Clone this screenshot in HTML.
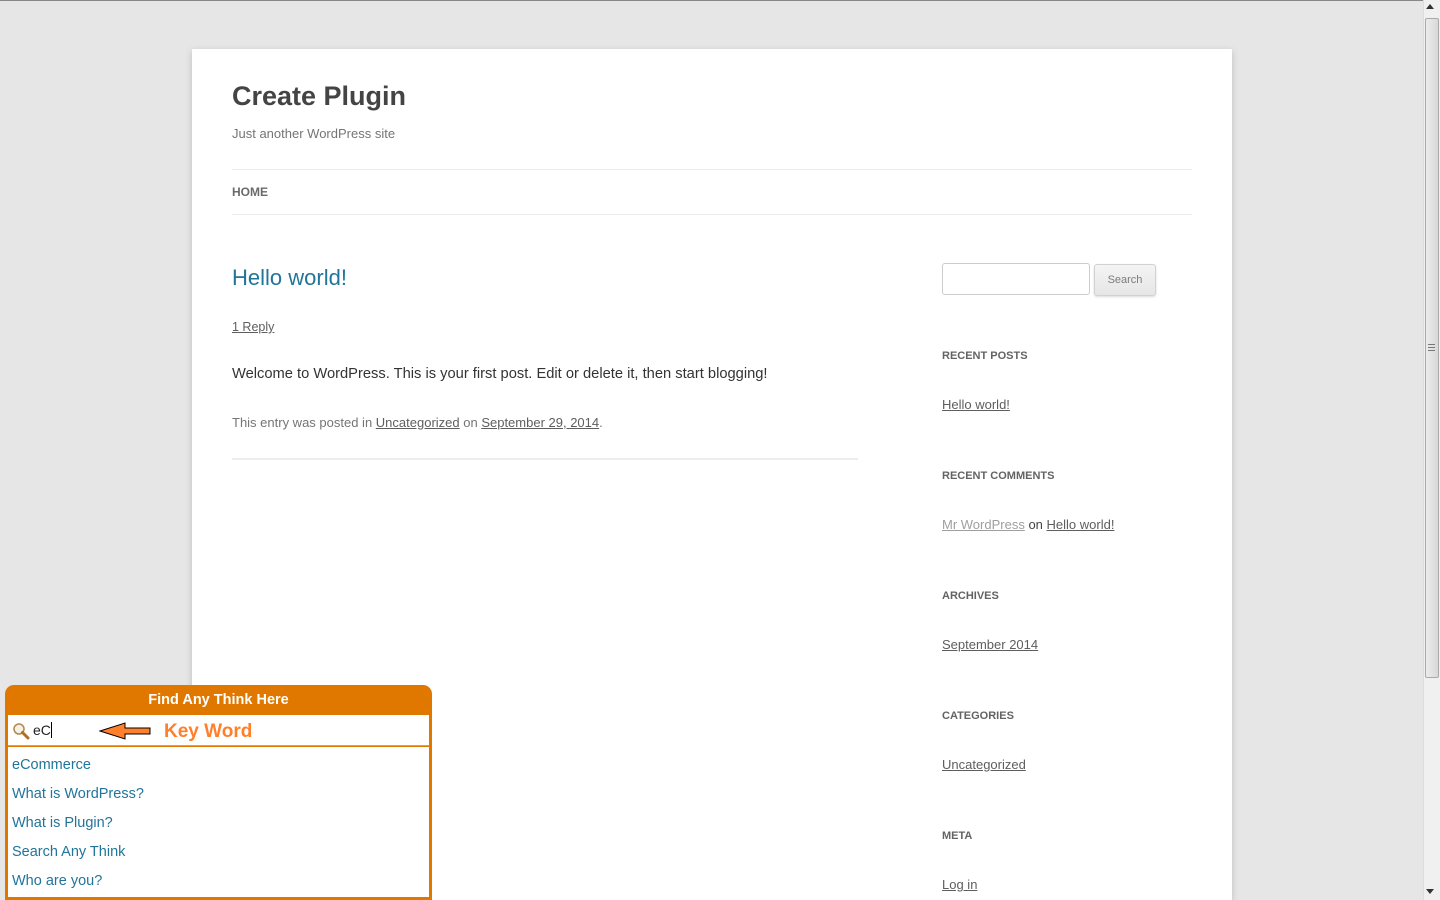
<!DOCTYPE html>
<html><head><meta charset="utf-8"><style>
*{margin:0;padding:0;box-sizing:border-box}
html,body{width:1440px;height:900px;overflow:hidden}
body{background:#e6e6e6;font-family:"Liberation Sans",sans-serif;color:#444;position:relative}
.abs{position:absolute;white-space:nowrap}
#page{position:absolute;left:192px;top:49px;width:1040px;height:851px;background:#fff;box-shadow:0 2px 6px rgba(100,100,100,.3)}
.u{text-decoration:underline;color:#5e5e5e}
.w{font-size:11px;font-weight:bold;color:#636363}
#sb{position:absolute;left:1423px;top:0;width:17px;height:900px;background:#f0f0f0;border-left:1px solid #ddd}
</style></head><body>
<div style="position:absolute;left:0;top:0;width:1440px;height:1px;background:#888"></div>
<div id="page"></div>
<div class="abs" style="left:232px;top:81px;font-size:27px;font-weight:bold;color:#444">Create Plugin</div>
<div class="abs" style="left:232px;top:126px;font-size:13px;color:#757575">Just another WordPress site</div>
<div class="abs" style="left:232px;top:169px;width:960px;height:1px;background:#ededed"></div>
<div class="abs" style="left:232px;top:185px;font-size:12px;font-weight:bold;color:#6a6a6a">HOME</div>
<div class="abs" style="left:232px;top:214px;width:960px;height:1px;background:#ededed"></div>
<div class="abs" style="left:232px;top:265px;font-size:22px;color:#21759b">Hello world!</div>
<div class="abs u" style="left:232px;top:320px;font-size:12.5px">1 Reply</div>
<div class="abs" style="left:232px;top:366px;font-size:14.7px;color:#333">Welcome to WordPress. This is your first post. Edit or delete it, then start blogging!</div>
<div class="abs" style="left:232px;top:415px;font-size:13px;color:#757575">This entry was posted in <span class="u">Uncategorized</span> on <span class="u">September 29, 2014</span>.</div>
<div class="abs" style="left:232px;top:458px;width:626px;height:2px;border-top:1px solid #ededed;border-bottom:1px solid #ededed"></div>
<div class="abs" style="left:942px;top:263px;width:148px;height:32px;border:1px solid #ccc;border-radius:3px"></div>
<div class="abs" style="left:1094px;top:264px;width:62px;height:32px;border:1px solid #d2d2d2;border-radius:3px;background:linear-gradient(#f4f4f4,#e6e6e6);font-size:11px;color:#7c7c7c;text-align:center;line-height:30px;box-shadow:0 1px 2px rgba(0,0,0,.15)">Search</div>
<div class="abs w" style="left:942px;top:350px">RECENT POSTS</div>
<div class="abs u" style="left:942px;top:397px;font-size:13px">Hello world!</div>
<div class="abs w" style="left:942px;top:470px">RECENT COMMENTS</div>
<div class="abs" style="left:942px;top:517px;font-size:13px;color:#444"><span class="u" style="color:#9f9f9f">Mr WordPress</span> on <span class="u">Hello world!</span></div>
<div class="abs w" style="left:942px;top:590px">ARCHIVES</div>
<div class="abs u" style="left:942px;top:637px;font-size:13px">September 2014</div>
<div class="abs w" style="left:942px;top:710px">CATEGORIES</div>
<div class="abs u" style="left:942px;top:757px;font-size:13px">Uncategorized</div>
<div class="abs w" style="left:942px;top:830px">META</div>
<div class="abs u" style="left:942px;top:877px;font-size:13px">Log in</div>

<div class="abs" style="left:5px;top:685px;width:427px;height:215px;background:#e07800;border-radius:9px 9px 0 0"></div>
<div class="abs" style="left:5px;top:692px;width:427px;text-align:center;font-size:14.5px;font-weight:bold;color:#fff">Find Any Think Here</div>
<div class="abs" style="left:8px;top:715px;width:421px;height:31px;background:#fff;border-bottom:1px solid #aaa"></div>
<div class="abs" style="left:8px;top:747px;width:421px;height:150px;background:#fff"></div>
<svg class="abs" style="left:12px;top:722px" width="18" height="18"><circle cx="7" cy="7" r="5" fill="#f8f0e0" stroke="#b08850" stroke-width="1.5"/><path d="M10.5 10.5L16 16" stroke="#b07020" stroke-width="3" stroke-linecap="round"/></svg>
<div class="abs" style="left:33px;top:722px;font-size:14px;color:#222">eC<span style="display:inline-block;width:1px;height:16px;background:#000;vertical-align:-3px"></span></div>
<svg class="abs" style="left:99px;top:721px" width="54" height="20"><path d="M1 10L26 2V7H51V13H26V18Z" fill="#ff7f2a" stroke="#000" stroke-width="1"/></svg>
<div class="abs" style="left:164px;top:721px;font-size:19px;font-weight:bold;color:#ff7f2a">Key Word</div>
<div class="abs" style="left:12px;top:751px;font-size:14.5px;color:#21759b;line-height:29px">eCommerce<br>What is WordPress?<br>What is Plugin?<br>Search Any Think<br>Who are you?</div>

<div id="sb"></div>
<div class="abs" style="left:1426px;top:4px;width:0;height:0;border-left:4px solid transparent;border-right:4px solid transparent;border-bottom:5px solid #333"></div>
<div class="abs" style="left:1425px;top:18px;width:14px;height:660px;background:linear-gradient(90deg,#ececec,#d8d8d8);border:1px solid #aaa;border-radius:2px"></div>
<div class="abs" style="left:1428px;top:344px;width:7px;height:7px;border-top:1px solid #777;border-bottom:1px solid #777"><div style="margin-top:2px;height:1px;background:#777"></div></div>
<div class="abs" style="left:1426px;top:889px;width:0;height:0;border-left:4px solid transparent;border-right:4px solid transparent;border-top:5px solid #333"></div>
</body></html>
